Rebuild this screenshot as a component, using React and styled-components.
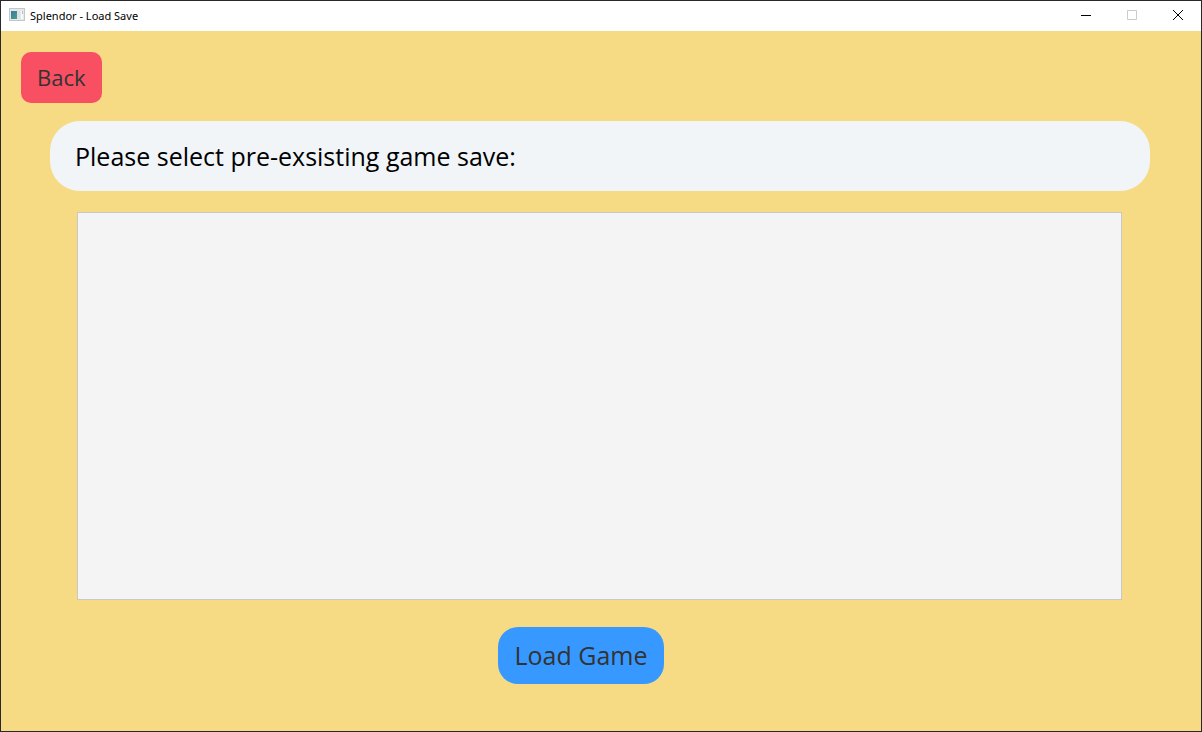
import React from "react";
import styled, { createGlobalStyle } from "styled-components";

const GlobalStyle = createGlobalStyle`
  *, *::before, *::after { box-sizing: border-box; }
  body {
    margin: 0;
    font-family: "Segoe UI", "Open Sans", "Noto Sans", sans-serif;
  }
`;

const Window = styled.div`
  display: flex;
  flex-direction: column;
  min-height: 100vh;
  border: 1px solid #29282a;
  background: #f7db84;
`;

const TitleBar = styled.header`
  display: flex;
  align-items: center;
  justify-content: space-between;
  height: 30px;
  padding-left: 8px;
  background: #fff;
`;

const TitleGroup = styled.div`
  display: flex;
  align-items: center;
  gap: 5px;
`;

const Title = styled.h1`
  margin: 0;
  font-family: "Segoe UI", "Noto Sans", sans-serif;
  font-size: 11px;
  line-height: 16px;
  font-weight: 400;
  color: #000;
`;

const WindowControls = styled.div`
  display: flex;
  height: 100%;
  padding-bottom: 2px;
`;

const ControlButton = styled.button`
  display: flex;
  align-items: center;
  justify-content: center;
  width: 46px;
  padding: 0;
  border: 0;
  background: transparent;
  color: ${(p) => (p.disabled ? "#ccc" : "#000")};
`;

const Content = styled.main`
  flex: 1;
  display: flex;
  flex-direction: column;
  padding: 21px 0 47px;
`;

const ActionButton = styled.button`
  padding: 0 16px;
  border: 0;
  border-radius: ${(p) => p.$radius}px;
  background: ${(p) => p.$color};
  color: #333;
  font-family: inherit;
  font-size: ${(p) => p.$size}px;
  line-height: ${(p) => p.$height}px;
  white-space: nowrap;
`;

const TopActions = styled.div`
  display: flex;
  padding-left: 20px;
`;

const Banner = styled.label`
  display: block;
  margin: 18px 51px 0 49px;
  padding: 0 25px;
  border-radius: 30px;
  background: #f1f5f8;
  color: #000;
  font-size: 25px;
  line-height: 70px;
`;

const SaveList = styled.select`
  flex: 1;
  min-height: 160px;
  margin: 21px 79px 0 76px;
  border: 1px solid #c8c8c8;
  border-radius: 0;
  background: #f4f4f4;
  outline: 0;
`;

const BottomActions = styled.footer`
  display: flex;
  justify-content: center;
  padding: 27px 40px 0 0;
`;

function AppIcon() {
  return (
    <svg width="16" height="16" viewBox="0 0 16 16" aria-hidden="true">
      <defs>
        <linearGradient id="pane" x1="0" y1="0" x2="1" y2="1">
          <stop offset="0" stopColor="#3f78a6" />
          <stop offset="1" stopColor="#4ba07c" />
        </linearGradient>
      </defs>
      <rect x="0.5" y="0.5" width="15" height="12" fill="#e6e9eb" stroke="#c3c7c9" />
      <rect x="2" y="3" width="6" height="8" fill="url(#pane)" />
      <rect x="8" y="3" width="3" height="8" fill="#dce1e6" />
      <rect x="12" y="3" width="2" height="8" fill="#f5f8f9" />
      <rect x="13" y="3" width="1" height="3" fill="#a9cbb6" />
    </svg>
  );
}

function ControlIcon({ d }) {
  return (
    <svg width="10" height="10" viewBox="0 0 10 10" fill="none" stroke="currentColor" aria-hidden="true">
      <path d={d} />
    </svg>
  );
}

export default function App() {
  return (
    <>
      <GlobalStyle />
      <Window>
        <TitleBar>
          <TitleGroup>
            <AppIcon />
            <Title>Splendor - Load Save</Title>
          </TitleGroup>
          <WindowControls>
            <ControlButton type="button" aria-label="Minimize">
              <ControlIcon d="M0 5.5H10" />
            </ControlButton>
            <ControlButton type="button" aria-label="Maximize" disabled>
              <ControlIcon d="M0.5 0.5H9.5V9.5H0.5Z" />
            </ControlButton>
            <ControlButton type="button" aria-label="Close">
              <ControlIcon d="M0 0L10 10M10 0L0 10" />
            </ControlButton>
          </WindowControls>
        </TitleBar>
        <Content>
          <TopActions>
            <ActionButton type="button" $color="#f84f63" $radius={10} $size={22} $height={51}>
              Back
            </ActionButton>
          </TopActions>
          <Banner htmlFor="saves">Please select pre-exsisting game save:</Banner>
          <SaveList id="saves" size={10} />
          <BottomActions>
            <ActionButton type="button" $color="#3799ff" $radius={20} $size={25} $height={57}>
              Load Game
            </ActionButton>
          </BottomActions>
        </Content>
      </Window>
    </>
  );
}
